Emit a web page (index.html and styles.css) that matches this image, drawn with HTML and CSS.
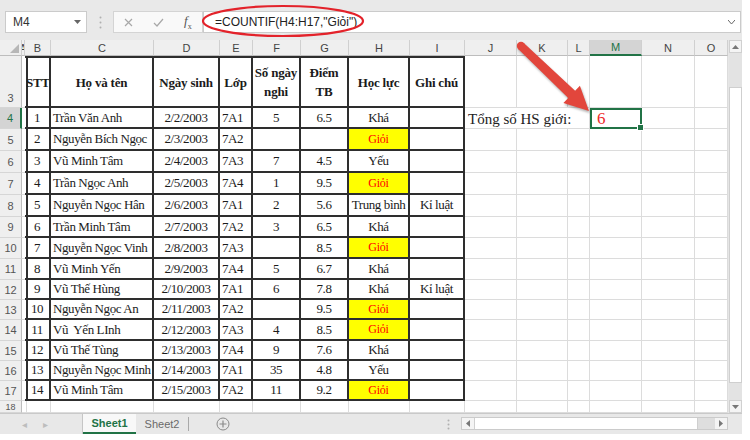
FILE: index.html
```html
<!DOCTYPE html>
<html lang="vi">
<head>
<meta charset="utf-8">
<title>Excel COUNTIF</title>
<link rel="stylesheet" href="styles.css">
</head>
<body>
<div class="app">
  <div class="fbar">
    <div class="namebox"><span>M4</span><svg class="caret" width="7" height="4" viewBox="0 0 7 4"><path d="M0 0h7L3.5 4z" fill="#666"/></svg></div>
    <div class="grip"><svg width="3" height="13" viewBox="0 0 3 13"><circle cx="1.5" cy="1.5" r="1" fill="#b0b0b0"/><circle cx="1.5" cy="6.5" r="1" fill="#b0b0b0"/><circle cx="1.5" cy="11.5" r="1" fill="#b0b0b0"/></svg></div>
    <div class="fxbox">
      <svg width="9" height="9" viewBox="0 0 9 9"><path d="M1 1l7 7M8 1L1 8" stroke="#a8a8a8" stroke-width="1.2"/></svg>
      <svg width="11" height="9" viewBox="0 0 11 9"><path d="M1 5l3 3 6-7" stroke="#a8a8a8" stroke-width="1.2" fill="none"/></svg>
      <span class="fx"><i>f</i><sub>x</sub></span>
    </div>
    <div class="formula"><span>=COUNTIF(H4:H17,"Giỏi")</span><svg width="7" height="4" viewBox="0 0 7 4"><path d="M0 0l3.5 4L7 0" stroke="#666" fill="none"/></svg></div>
  </div>

  <div class="main">
    <div class="sheet">
      <!-- header -->
      <div class="h corner"><span class="tri"></span></div><div class="h">A</div><div class="h">B</div><div class="h">C</div><div class="h">D</div><div class="h">E</div><div class="h">F</div><div class="h">G</div><div class="h">H</div><div class="h">I</div><div class="h">J</div><div class="h">K</div><div class="h">L</div><div class="h sel">M</div><div class="h">N</div><div class="h">O</div>
      <!-- row 3 -->
      <div class="rh r3">3</div><div class="tl"></div><div class="t top b stt">STT</div><div class="t top b ctr">Họ và tên</div><div class="t top b ctr">Ngày sinh</div><div class="t top b ctr">Lớp</div><div class="t top b ctr">Số ngày<br>nghi</div><div class="t top b ctr">Điểm<br>TB</div><div class="t top b ctr">Học lực</div><div class="t top b ctr">Ghi chú</div><div></div><div></div><div></div><div></div><div></div><div></div>
      <!-- row 4 -->
      <div class="rh sel">4</div><div class="tl"></div><div class="t ctr">1</div><div class="t">Trần Văn Anh</div><div class="t ctr">2/2/2003</div><div class="t">7A1</div><div class="t ctr">5</div><div class="t ctr">6.5</div><div class="t ctr">Khá</div><div class="t"></div><div class="j4">Tổng số HS giới:</div><div class="m4">6</div><div></div><div></div>
      <!-- row 5 -->
      <div class="rh">5</div><div class="tl"></div><div class="t ctr">2</div><div class="t">Nguyễn Bích Ngọc</div><div class="t ctr">2/3/2003</div><div class="t">7A2</div><div class="t ctr"></div><div class="t ctr"></div><div class="t ctr y">Giỏi</div><div class="t"></div><div></div><div></div><div></div><div></div><div></div><div></div>
      <!-- row 6 -->
      <div class="rh">6</div><div class="tl"></div><div class="t ctr">3</div><div class="t">Vũ Minh Tâm</div><div class="t ctr">2/4/2003</div><div class="t">7A3</div><div class="t ctr">7</div><div class="t ctr">4.5</div><div class="t ctr">Yếu</div><div class="t"></div><div></div><div></div><div></div><div></div><div></div><div></div>
      <!-- row 7 -->
      <div class="rh">7</div><div class="tl"></div><div class="t ctr">4</div><div class="t">Trần Ngọc Anh</div><div class="t ctr">2/5/2003</div><div class="t">7A4</div><div class="t ctr">1</div><div class="t ctr">9.5</div><div class="t ctr y">Giỏi</div><div class="t"></div><div></div><div></div><div></div><div></div><div></div><div></div>
      <!-- row 8 -->
      <div class="rh">8</div><div class="tl"></div><div class="t ctr">5</div><div class="t">Nguyễn Ngọc Hân</div><div class="t ctr">2/6/2003</div><div class="t">7A1</div><div class="t ctr">2</div><div class="t ctr">5.6</div><div class="t ctr">Trung bình</div><div class="t ctr">Kỉ luật</div><div></div><div></div><div></div><div></div><div></div><div></div>
      <!-- row 9 -->
      <div class="rh">9</div><div class="tl"></div><div class="t ctr">6</div><div class="t">Trần Minh Tâm</div><div class="t ctr">2/7/2003</div><div class="t">7A2</div><div class="t ctr">3</div><div class="t ctr">6.5</div><div class="t ctr">Khá</div><div class="t"></div><div></div><div></div><div></div><div></div><div></div><div></div>
      <!-- row 10 -->
      <div class="rh">10</div><div class="tl"></div><div class="t ctr">7</div><div class="t">Nguyễn Ngọc Vinh</div><div class="t ctr">2/8/2003</div><div class="t">7A3</div><div class="t ctr"></div><div class="t ctr">8.5</div><div class="t ctr y">Giỏi</div><div class="t"></div><div></div><div></div><div></div><div></div><div></div><div></div>
      <!-- row 11 -->
      <div class="rh">11</div><div class="tl"></div><div class="t ctr">8</div><div class="t">Vũ Minh Yến</div><div class="t ctr">2/9/2003</div><div class="t">7A4</div><div class="t ctr">5</div><div class="t ctr">6.7</div><div class="t ctr">Khá</div><div class="t"></div><div></div><div></div><div></div><div></div><div></div><div></div>
      <!-- row 12 -->
      <div class="rh">12</div><div class="tl"></div><div class="t ctr">9</div><div class="t">Vũ Thế Hùng</div><div class="t ctr">2/10/2003</div><div class="t">7A1</div><div class="t ctr">6</div><div class="t ctr">7.8</div><div class="t ctr">Khá</div><div class="t ctr">Kỉ luật</div><div></div><div></div><div></div><div></div><div></div><div></div>
      <!-- row 13 -->
      <div class="rh">13</div><div class="tl"></div><div class="t ctr">10</div><div class="t">Nguyễn Ngọc An</div><div class="t ctr">2/11/2003</div><div class="t">7A2</div><div class="t ctr"></div><div class="t ctr">9.5</div><div class="t ctr y">Giỏi</div><div class="t"></div><div></div><div></div><div></div><div></div><div></div><div></div>
      <!-- row 14 -->
      <div class="rh">14</div><div class="tl"></div><div class="t ctr">11</div><div class="t">Vũ&nbsp; Yến LInh</div><div class="t ctr">2/12/2003</div><div class="t">7A3</div><div class="t ctr">4</div><div class="t ctr">8.5</div><div class="t ctr y">Giỏi</div><div class="t"></div><div></div><div></div><div></div><div></div><div></div><div></div>
      <!-- row 15 -->
      <div class="rh">15</div><div class="tl"></div><div class="t ctr">12</div><div class="t">Vũ Thế Tùng</div><div class="t ctr">2/13/2003</div><div class="t">7A4</div><div class="t ctr">9</div><div class="t ctr">7.6</div><div class="t ctr">Khá</div><div class="t"></div><div></div><div></div><div></div><div></div><div></div><div></div>
      <!-- row 16 -->
      <div class="rh">16</div><div class="tl"></div><div class="t ctr">13</div><div class="t">Nguyễn Ngọc Minh</div><div class="t ctr">2/14/2003</div><div class="t">7A1</div><div class="t ctr">35</div><div class="t ctr">4.8</div><div class="t ctr">Yếu</div><div class="t"></div><div></div><div></div><div></div><div></div><div></div><div></div>
      <!-- row 17 -->
      <div class="rh">17</div><div class="tl"></div><div class="t ctr">14</div><div class="t">Vũ Minh Tâm</div><div class="t ctr">2/15/2003</div><div class="t">7A2</div><div class="t ctr">11</div><div class="t ctr">9.2</div><div class="t ctr y">Giỏi</div><div class="t"></div><div></div><div></div><div></div><div></div><div></div><div></div>
      <!-- row 18 -->
      <div class="rh r18">18</div><div></div><div></div><div></div><div></div><div></div><div></div><div></div><div></div><div></div><div></div><div></div><div></div><div></div><div></div><div></div>
    </div>
    <div class="vscroll">
      <div class="sbtn"><svg width="7" height="4" viewBox="0 0 7 4"><path d="M0 4h7L3.5 0z" fill="#777"/></svg></div>
      <div class="vtrack"><div class="vthumb"></div></div>
      <div class="sbtn"><svg width="7" height="4" viewBox="0 0 7 4"><path d="M0 0h7L3.5 4z" fill="#777"/></svg></div>
    </div>
  </div>

  <div class="tabbar">
    <div class="nav"><span>◂</span><span>▸</span></div>
    <div class="tab active">Sheet1</div>
    <div class="tab">Sheet2</div>
    <div class="tsep"></div>
    <div class="plus"><svg width="14" height="14" viewBox="0 0 14 14"><circle cx="7" cy="7" r="6" fill="none" stroke="#8a8a8a" stroke-width="1"/><path d="M7 3.5v7M3.5 7h7" stroke="#8a8a8a" stroke-width="1.2"/></svg></div>
    <div class="spacer"></div>
    <div class="hgrip"><svg width="3" height="11" viewBox="0 0 3 11"><circle cx="1.5" cy="1.5" r="1" fill="#b0b0b0"/><circle cx="1.5" cy="5.5" r="1" fill="#b0b0b0"/><circle cx="1.5" cy="9.5" r="1" fill="#b0b0b0"/></svg></div>
    <div class="hscroll">
      <div class="hbtn"><svg width="4" height="7" viewBox="0 0 4 7"><path d="M4 0v7L0 3.5z" fill="#777"/></svg></div>
      <div class="hthumb"></div>
      <div class="htrack"></div>
      <div class="hbtn"><svg width="4" height="7" viewBox="0 0 4 7"><path d="M0 0v7L4 3.5z" fill="#777"/></svg></div>
    </div>
    <div class="tend"></div>
  </div>

  <svg class="overlay" width="742" height="434" viewBox="0 0 742 434">
    <ellipse cx="283" cy="21" rx="80" ry="15" fill="none" stroke="#e3222a" stroke-width="2.2"/>
    <g class="arrow">
      <circle cx="521" cy="46" r="4.2" fill="#e2463c"/>
      <polygon points="523.8,43.1 575.1,90.8 579.9,85.7 589,111 563.4,103.1 568.2,98 518.2,48.9" fill="#e2463c"/>
    </g>
  </svg>
</div>
</body>
</html>
```
FILE: styles.css
```css
* { box-sizing: border-box; margin: 0; padding: 0; }
body {
  width: 750px; height: 440px; overflow: hidden;
  background: #fff;
  font-family: "Liberation Sans", Arial, sans-serif;
}
.app {
  position: relative;
  width: 742px; height: 434px;
  background: #e6e6e6;
  display: flex; flex-direction: column;
}
/* formula bar */
.fbar {
  height: 40px;
  display: flex; align-items: flex-start;
  padding: 11px 0 0 5px;
  background: #e9e9e9;
}
.namebox {
  width: 82px; height: 22px;
  background: #fff; border: 1px solid #cbcbcb;
  display: flex; align-items: center; justify-content: space-between;
  padding: 0 5px 0 7px;
  font-size: 12px; color: #333;
}
.grip { width: 26px; height: 22px; display: flex; align-items: center; justify-content: center; }
.fxbox {
  width: 90px; height: 22px;
  background: #f9f9f9; border: 1px solid #d4d4d4;
  display: flex; align-items: center; gap: 20px;
  padding-left: 10px;
}
.fx { font-family: "Liberation Serif", serif; font-size: 13px; color: #555; }
.fx sub { font-size: 8px; font-style: normal; }
.formula {
  width: 538px; height: 22px;
  background: #fff; border: 1px solid #cbcbcb;
  display: flex; align-items: center; justify-content: space-between;
  padding: 0 5px 0 11px;
  font-size: 12px; color: #222;
}
/* sheet */
.main { height: 373px; display: flex; gap: 1px; }
.sheet {
  width: 728px; height: 373px;
  background: #fff;
  display: grid;
  grid-template-columns: 22px 3px 26px 103px 66px 33px 48px 48px 61px 55px 52px 51px 22px 52px 53px 33px;
  grid-template-rows: 16px 52px 21px 22px 22px 22px 22px 21px 21px 21px 20px 20px 21px 20px 20px 20px 12px;
}
.sheet > div {
  border-right: 1px solid #dcdcdc;
  border-bottom: 1px solid #dcdcdc;
  display: flex; align-items: center;
  overflow: hidden; white-space: nowrap;
  padding: 0 2px;
  font-family: "Liberation Serif", "Times New Roman", serif;
  font-size: 13px; letter-spacing: -0.4px;
  color: #1b1b1b;
}
.sheet > .h {
  background: #efefef;
  font-family: "Liberation Sans", Arial, sans-serif;
  font-size: 11px; letter-spacing: 0; color: #444;
  justify-content: center; padding: 0;
  border-right-color: #d0d0d0; border-bottom-color: #bdbdbd;
}
.sheet > .corner { align-items: flex-end; justify-content: flex-end; padding: 0 2px 2px 0; }
.tri { width: 0; height: 0; border-left: 9px solid transparent; border-bottom: 9px solid #b7b7b7; }
.sheet > .h.sel { background: #d4d4d4; color: #217346; border-bottom: 2px solid #217346; }
.sheet > .rh {
  background: #efefef;
  font-family: "Liberation Sans", Arial, sans-serif;
  font-size: 11px; letter-spacing: 0; color: #555;
  justify-content: center; padding: 0;
  border-right-color: #bdbdbd; border-bottom-color: #d6d6d6;
}
.sheet > .rh.r3 { align-items: flex-end; padding-bottom: 3px; }
.sheet > .rh.r18 { align-items: flex-start; padding-top: 1px; font-size: 9px; }
.sheet > .rh.sel { background: #d4d4d4; color: #217346; border-right: 2px solid #217346; }
.sheet > .tl { border-right: 2px solid #2e2e2e; }
.sheet > .t { border-right: 2px solid #2e2e2e; border-bottom: 2px solid #2e2e2e; }
.sheet > .top { border-top: 2px solid #2e2e2e; }
.sheet > .ctr { justify-content: center; }
.sheet > .b {
  font-weight: bold; letter-spacing: -0.2px;
  white-space: nowrap; text-align: center; line-height: 19px;
  padding: 0;
}
.sheet > .stt { padding: 0 0 0 1px; letter-spacing: -0.3px; }
.sheet > .y { background: #ffff00; color: #f00; font-size: 12px; letter-spacing: -0.2px; }
.sheet > .j4 {
  grid-column: span 3;
  font-size: 15px; letter-spacing: 0; color: #222;
  padding-left: 3px; padding-top: 2px;
}
.sheet > .m4 {
  position: relative; overflow: visible;
  border: 2px solid #217346;
  color: #ee2a2a; font-size: 17px; letter-spacing: 0;
  padding-left: 5px; padding-top: 1px;
}
.m4::after {
  content: ""; position: absolute; right: -4px; bottom: -4px;
  width: 5px; height: 5px; background: #217346; border: 1px solid #fff;
}
/* vertical scrollbar */
.vscroll { width: 13px; display: flex; flex-direction: column; background: #e3e3e3; }
.sbtn { height: 13px; background: #f4f4f4; border: 1px solid #d0d0d0; display: flex; align-items: center; justify-content: center; }
.vtrack { flex: 1; padding-top: 34px; }
.vthumb { height: 296px; background: #fff; border: 1px solid #cfcfcf; }
/* tab bar */
.tabbar {
  height: 21px;
  display: flex; align-items: stretch;
  background: #e8e8e8;
  border-top: 1px solid #c9c9c9;
  font-size: 11px;
}
.nav { width: 83px; display: flex; align-items: center; gap: 16px; padding-left: 22px; color: #bdbdbd; font-size: 10px; border-right: 1px solid #c6c6c6; }
.tab { width: 53px; display: flex; align-items: center; justify-content: center; color: #6a6a6a; }
.tab + .tab { width: 52px; }
.tab.active { background: #f8f8f8; color: #217346; font-weight: bold; border-bottom: 2px solid #217346; }
.tsep { width: 1px; margin: 3px 0; background: #a9a9a9; }
.plus { width: 70px; display: flex; align-items: center; justify-content: center; padding-right: 2px; }
.spacer { flex: 1; }
.hgrip { width: 20px; display: flex; align-items: center; padding-left: 6px; }
.hscroll { width: 267px; height: 13px; margin-top: 3px; display: flex; background: #dedede; border: 1px solid #cbcbcb; }
.hbtn { width: 12px; background: #f4f4f4; display: flex; align-items: center; justify-content: center; }
.hthumb { width: 224px; background: #fff; border-left: 1px solid #cfcfcf; border-right: 1px solid #cfcfcf; }
.htrack { flex: 1; }
.tend { width: 14px; }
/* annotations */
.overlay { position: absolute; left: 0; top: 0; pointer-events: none; }
.arrow { filter: drop-shadow(1px 2px 1px rgba(0,0,0,0.3)); }
```
